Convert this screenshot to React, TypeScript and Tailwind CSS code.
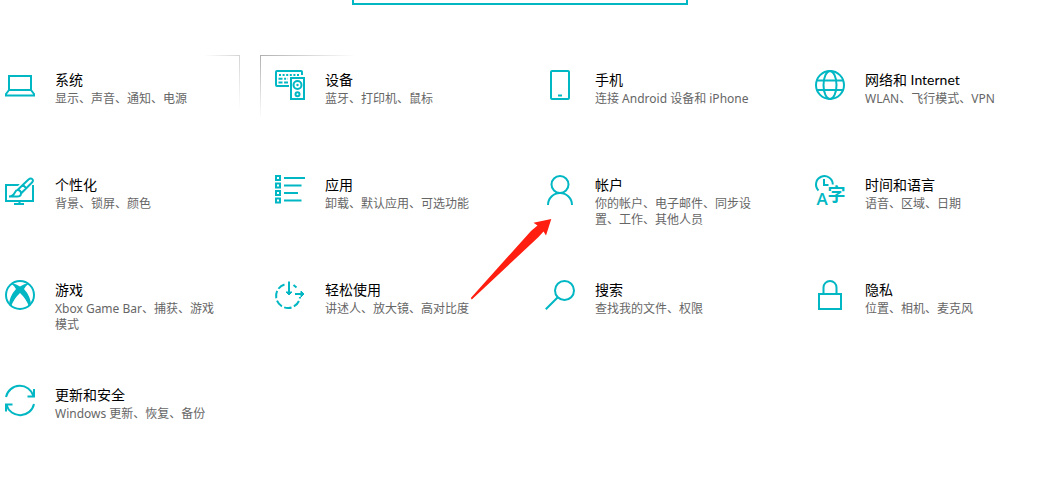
import React from 'react';

const icons: Record<string, React.ReactNode> = {
  system: (
    <>
      <rect x="4" y="6" width="22" height="14" />
      <path d="M4 20L1 24V25.5H29V24L26 20" />
    </>
  ),
  devices: (
    <>
      <path d="M14 16H2a1 1 0 0 1-1-1V2a1 1 0 0 1 1-1H26a1 1 0 0 1 1 1V5" />
      <path d="M4 5H25" strokeDasharray="2 1.6" />
      <path d="M3.5 8.7H13" strokeDasharray="4 1.6 2 1.6" />
      <path d="M3.5 12.5H13" strokeDasharray="4 1.6 4" />
      <rect x="16" y="8" width="13" height="21" fill="#fff" />
      <circle cx="22.5" cy="15" r="4" />
      <circle cx="22.5" cy="15" r="1.2" fill="#00b7c3" stroke="none" />
      <circle cx="22.5" cy="24.3" r="2" />
    </>
  ),
  phone: (
    <>
      <rect x="6" y="1" width="18" height="28" rx="1" />
      <path d="M13 25.5H17" />
    </>
  ),
  network: (
    <>
      <circle cx="15" cy="15" r="14" />
      <ellipse cx="15" cy="15" rx="6.5" ry="14" />
      <path d="M2 10.5H28M2 20H28" />
    </>
  ),
  personalization: (
    <>
      <path d="M17 10H1V26H28V10M14.5 26V29M9 29H19" />
      <path d="M3 21.5C8 22 8.5 15 12.5 14.5L23 3.5C26-0.5 31 4 27 7.5L17 18.5C17 23 9 24 3 21.5Z" fill="#fff" stroke="#fff" strokeWidth="4" />
      <path d="M12.5 15L23.5 4.5C26.5 2 29.5 5 27 7.5L16 18.5M12.5 15C9 15 11 21.5 4 21.5H12C15 21.5 16 20 16 18.5C16 16.5 14.5 15 12.5 15ZM18 10L21 13" />
    </>
  ),
  apps: (
    <>
      <rect x="1" y="1" width="4" height="4" />
      <rect x="1" y="8.5" width="4" height="4" />
      <rect x="1" y="16" width="4" height="4" />
      <rect x="1" y="23.5" width="4" height="4" />
      <path d="M9 3H30M9 10.5H26.5M9 18H23M9 25.5H26.5" />
    </>
  ),
  accounts: (
    <>
      <circle cx="15" cy="9.5" r="8.5" />
      <path d="M3 30A12 12 0 0 1 27 30" />
    </>
  ),
  time: (
    <>
      <path d="M3.5 15.5A8.4 8.4 0 1 1 17.8 9.5M9 4V10H13.5" />
      <text x="1.5" y="30" className="fill-[#00b7c3] stroke-none font-['Open_Sans',sans-serif] text-[17px] font-semibold">A</text>
      <text x="12.5" y="26" className="fill-[#00b7c3] stroke-none font-['Noto_Sans_CJK_SC',sans-serif] text-[18px] font-bold">字</text>
    </>
  ),
  gaming: (
    <>
      <circle cx="15" cy="15" r="14" />
      <path
        d="M15 6.5Q11 3.5 6 3.5Q9 5.5 11 9Q4.5 16 4 25L6 26.5Q9 18.5 15 13Q21 18.5 24 26.5L26 25Q25.5 16 19 9Q21 5.5 24 3.5Q19 3.5 15 6.5Z"
        fill="#00b7c3"
        stroke="none"
      />
    </>
  ),
  ease: (
    <>
      <path d="M9.5 4.5A12 12 0 1 0 25 17" strokeDasharray="7.5 2.5" />
      <path d="M14 1.5V15M20 14H28M18.5 5L21.5 7.5" />
      <path d="M11 12L14 15L17 12ZM26 11L29 14L26 17Z" fill="#00b7c3" strokeWidth="1" />
    </>
  ),
  search: (
    <>
      <circle cx="19.5" cy="10.5" r="9.5" />
      <path d="M12.8 17.2L0.8 29.2" />
    </>
  ),
  privacy: (
    <>
      <rect x="4" y="14" width="22" height="15" />
      <path d="M8.5 14V7.5a6.5 6.5 0 0 1 13 0V14" />
    </>
  ),
  update: (
    <>
      <path d="M1 12A14.2 14.2 0 0 1 28.5 11M29 4V11.5H22.5" />
      <path d="M29 19A14.2 14.2 0 0 1 1.5 20M1 26.5V19.5H7.5" />
    </>
  ),
};

const items = [
  { id: 'system', title: '系统', desc: '显示、声音、通知、电源' },
  { id: 'devices', title: '设备', desc: '蓝牙、打印机、鼠标' },
  { id: 'phone', title: '手机', desc: '连接 Android 设备和 iPhone' },
  { id: 'network', title: '网络和 Internet', desc: 'WLAN、飞行模式、VPN' },
  { id: 'personalization', title: '个性化', desc: '背景、锁屏、颜色' },
  { id: 'apps', title: '应用', desc: '卸载、默认应用、可选功能' },
  { id: 'accounts', title: '帐户', desc: '你的帐户、电子邮件、同步设置、工作、其他人员' },
  { id: 'time', title: '时间和语言', desc: '语音、区域、日期' },
  { id: 'gaming', title: '游戏', desc: 'Xbox Game Bar、捕获、游戏模式' },
  { id: 'ease', title: '轻松使用', desc: '讲述人、放大镜、高对比度' },
  { id: 'search', title: '搜索', desc: '查找我的文件、权限' },
  { id: 'privacy', title: '隐私', desc: '位置、相机、麦克风' },
  { id: 'update', title: '更新和安全', desc: 'Windows 更新、恢复、备份' },
];

const App = () => {
  return (
    <div className="min-h-screen bg-white">
      <div className="-ml-2.5 mr-[11px]">
        {/* Search box, scrolled almost out of view */}
        <header className="flex h-[5px] items-end justify-center overflow-hidden">
          <input
            type="text"
            aria-label="查找设置"
            className="h-8 w-[336px] shrink-0 border-2 border-[#00b7c3] bg-white px-2 text-sm outline-none"
          />
        </header>

        {/* Categories */}
        <nav className="mt-[50px] grid grid-cols-4 gap-5 pb-5">
          {items.map((item) => (
            <a
              key={item.id}
              href={`#${item.id}`}
              className="relative flex min-h-[85px] items-start gap-5 pt-[15px] pr-5 pl-[15px]"
            >
              {/* Reveal highlight on the edges near the pointer */}
              {item.id === 'system' && (
                <>
                  <span className="absolute top-0 right-0 h-px w-9 bg-linear-to-l from-[#d4d4d4] to-transparent" />
                  <span className="absolute top-0 right-0 h-14 w-px bg-linear-to-b from-[#d4d4d4] to-transparent" />
                </>
              )}
              {item.id === 'devices' && (
                <>
                  <span className="absolute top-0 left-0 h-px w-24 bg-linear-to-r from-[#b0b0b0] to-transparent" />
                  <span className="absolute top-0 left-0 h-16 w-px bg-linear-to-b from-[#b0b0b0] to-transparent" />
                </>
              )}

              <svg
                viewBox="0 0 30 30"
                className="size-[30px] shrink-0 overflow-visible"
                fill="none"
                stroke="#00b7c3"
                strokeWidth="2"
                aria-hidden="true"
              >
                {icons[item.id]}
              </svg>
              <span className="min-w-0 flex-1">
                <span className="block font-['Lato','Noto_Sans_CJK_SC',sans-serif] text-sm leading-5 text-black">
                  {item.title}
                </span>
                <span className="mt-px block font-['Noto_Sans','Noto_Sans_CJK_SC',sans-serif] text-xs leading-4 text-[#666]">
                  {item.desc}
                </span>
              </span>

              {/* Pointer arrow */}
              {item.id === 'accounts' && (
                <svg
                  viewBox="0 0 84 84"
                  className="pointer-events-none absolute top-[58px] -left-[60px] z-10 size-[84px]"
                  aria-hidden="true"
                >
                  <path d="M81.3 1L63.5 4.8L67.5 7.5L61 13L0.8 80L1.8 81.5L68.5 19L73.5 13.5L76 17.5Z" fill="#ff1e10" />
                </svg>
              )}
            </a>
          ))}
        </nav>
      </div>
    </div>
  );
};

export default App;
